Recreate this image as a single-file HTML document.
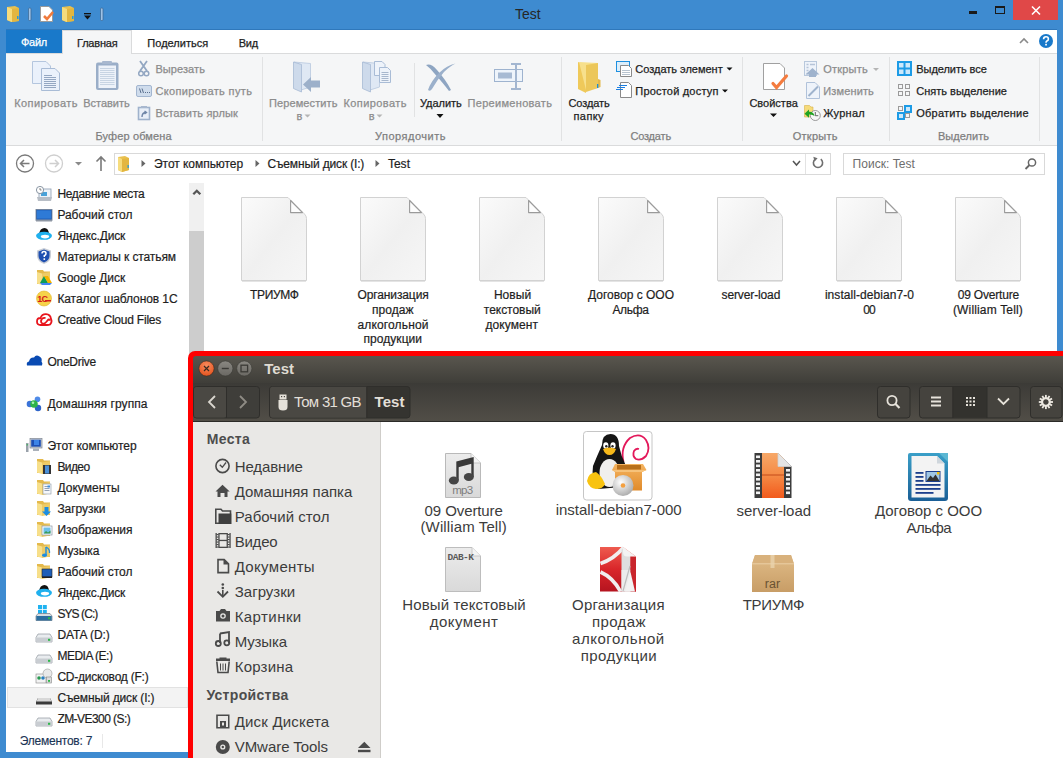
<!DOCTYPE html>
<html><head><meta charset="utf-8">
<style>
*{margin:0;padding:0;box-sizing:border-box}
html,body{width:1063px;height:758px;overflow:hidden;background:#3d88cc;font-family:"Liberation Sans",sans-serif;position:relative}
.a{position:absolute}
.t{position:absolute;white-space:nowrap;line-height:normal;font-family:"Liberation Sans",sans-serif}
svg{position:absolute;overflow:visible}
</style></head><body>
<div class="a" style="left:0;top:0;width:1063px;height:758px;background:#3e8bd0"></div>
<div class="a" style="left:6px;top:29px;width:1051px;height:1px;background:#2f78bb"></div>
<svg style="left:0;top:0" width="110" height="30">
<g transform="translate(7,6)"><path d="M0 1 L8 0 L12 2 L12 15 L4 16 L0 14 Z" fill="#e9c04e"/><path d="M0 1 L5 3 L5 16 L0 14Z" fill="#f6dc7d"/><path d="M5 3 L12 2 L12 15 L5 16Z" fill="#e3b640"/><rect x="10" y="10" width="1.5" height="3" fill="#2a9bd8"/></g>
<rect x="28.5" y="8" width="2.5" height="12.5" rx="1" fill="#9ec2e6" stroke="#3b668f" stroke-width="0.7"/>
<g transform="translate(40,6)"><path d="M0.5 0.5 H9 L12.5 4 V15.5 H0.5Z" fill="#fff" stroke="#9a9a9a"/><path d="M4 10 L7 13 L13 6" stroke="#f07a3c" stroke-width="2.6" fill="none"/></g>
<g transform="translate(62,6)"><path d="M0 1 L8 0 L12 2 L12 15 L4 16 L0 14 Z" fill="#e9c04e"/><path d="M0 1 L5 3 L5 16 L0 14Z" fill="#f6dc7d"/><path d="M5 3 L12 2 L12 15 L5 16Z" fill="#e3b640"/><rect x="10" y="10" width="1.5" height="3" fill="#2a9bd8"/></g>
<rect x="84" y="13" width="7" height="1.3" fill="#111"/><path d="M84 15.5 H91 L87.5 19.5Z" fill="#111"/>
<rect x="100.5" y="8" width="2.5" height="12.5" rx="1" fill="#9ec2e6" stroke="#3b668f" stroke-width="0.7"/>
</svg>
<div class="t" style="left:515.00px;top:5.60px;font-size:14px;color:#262626;letter-spacing:-0.047px;">Test</div>
<div class="a" style="left:969px;top:11px;width:8px;height:3px;background:#1a1a1a"></div>
<div class="a" style="left:995px;top:6px;width:10px;height:8px;border:1.5px solid #1a1a1a;border-top-width:2.5px"></div>
<div class="a" style="left:1013px;top:0;width:45px;height:20px;background:#e04848"></div>
<svg style="left:1031px;top:6px" width="10" height="9"><path d="M1 0.5 L9 8.5 M9 0.5 L1 8.5" stroke="#fff" stroke-width="1.6"/></svg>
<div class="a" style="left:6px;top:30px;width:1051px;height:23px;background:#fff"></div>
<div class="a" style="left:6px;top:30px;width:56px;height:23px;background:#1979ca"></div>
<div class="a" style="left:62px;top:30px;width:70px;height:24px;background:#f5f6f7;border:1px solid #dadbdc;border-bottom:none"></div>
<div class="t" style="left:21.00px;top:35.50px;font-size:11px;color:#fff;letter-spacing:-0.262px;-webkit-text-stroke:0.25px;">Файл</div>
<div class="t" style="left:77.00px;top:36.50px;font-size:11px;color:#1e1e1e;letter-spacing:-0.196px;-webkit-text-stroke:0.25px;">Главная</div>
<div class="t" style="left:147.30px;top:36.50px;font-size:11px;color:#1e1e1e;letter-spacing:0.025px;-webkit-text-stroke:0.25px;">Поделиться</div>
<div class="t" style="left:238.70px;top:36.50px;font-size:11px;color:#1e1e1e;letter-spacing:-0.202px;-webkit-text-stroke:0.25px;">Вид</div>
<svg style="left:1019px;top:37px" width="10" height="7"><path d="M1 6 L5 2 L9 6" stroke="#8a8a8a" stroke-width="1.6" fill="none"/></svg>
<svg style="left:1039px;top:34px" width="14" height="14"><circle cx="7" cy="7" r="7" fill="#1979ca"/><path d="M4.6 5.2 Q4.6 2.7 7 2.7 Q9.4 2.7 9.4 4.9 Q9.4 6.3 7.9 7 Q7 7.5 7 8.8" stroke="#fff" stroke-width="1.6" fill="none"/><rect x="6.2" y="9.8" width="1.7" height="1.7" fill="#fff"/></svg>
<div class="a" style="left:6px;top:53px;width:1051px;height:93px;background:#f5f6f7;border-top:1px solid #dadbdc;border-bottom:1px solid #dadbdc"></div>
<div class="a" style="left:63px;top:53px;width:68px;height:2px;background:#f5f6f7"></div>
<div class="a" style="left:262px;top:57px;width:1px;height:84px;background:#e1e2e3"></div>
<div class="a" style="left:561px;top:57px;width:1px;height:84px;background:#e1e2e3"></div>
<div class="a" style="left:742px;top:57px;width:1px;height:84px;background:#e1e2e3"></div>
<div class="a" style="left:889px;top:57px;width:1px;height:84px;background:#e1e2e3"></div>
<div class="a" style="left:1039px;top:57px;width:1px;height:84px;background:#e1e2e3"></div>
<div class="a" style="left:414px;top:63px;width:1px;height:54px;background:#e1e2e3"></div>
<svg style="left:0;top:0" width="1063" height="146">
<!-- copy -->
<path d="M32.5 61.5 H46 L50.5 66 V83.5 H32.5Z" fill="#eaf1fb" stroke="#b4c6de"/>
<path d="M41.5 68.5 H55 L59.5 73 V90.5 H41.5Z" fill="#eaf1fb" stroke="#a9bcd6"/>
<g stroke="#94a7c2" stroke-width="1"><path d="M44 75.5 H52 M44 77.5H56 M44 79.5H56 M44 81.5H56 M44 83.5H56 M44 85.5H56 M44 87.5H56"/></g>
<!-- paste -->
<rect x="96" y="62.5" width="22.5" height="27.5" rx="2" fill="#9aaec8"/>
<rect x="98.5" y="65.5" width="17.5" height="22.5" fill="#edf2f9"/>
<rect x="102" y="61" width="10" height="3" rx="1" fill="#a8b8cf"/>
<g stroke="#bccbdd" stroke-width="0.8"><path d="M100 68.5H114.5 M100 70.5H114.5 M100 72.5H114.5 M100 74.5H114.5 M100 76.5H114.5 M100 78.5H114.5 M100 80.5H114.5 M100 82.5H114.5 M100 84.5H114.5"/></g>
<!-- cut -->
<path d="M140 61 L147 71 M147 61 L140 71" stroke="#93a7c2" stroke-width="1.8"/>
<circle cx="141" cy="73.5" r="2.3" fill="none" stroke="#93a7c2" stroke-width="1.5"/>
<circle cx="146.5" cy="73.5" r="2.3" fill="none" stroke="#93a7c2" stroke-width="1.5"/>
<!-- copy path -->
<rect x="136.5" y="85.5" width="15" height="11" rx="1.5" fill="#cfdcec" stroke="#a3b6d0"/>
<path d="M139.5 88.5 L141 93 M142 88.5 L143.5 93" stroke="#5a6f8e" stroke-width="1"/>
<path d="M145 92.5h1 M147 92.5h1 M149 92.5h1" stroke="#5a6f8e"/>
<!-- paste shortcut -->
<rect x="138.5" y="107.5" width="11" height="12" fill="#e9eff8" stroke="#9fb2cc" stroke-width="1.6"/>
<rect x="141" y="106" width="6" height="2" fill="#a8b8cf"/>
<path d="M142 117 Q142 112.5 146 112.5 M144.5 111 L146.5 112.5 L144.5 114" stroke="#6f86a8" stroke-width="1.4" fill="none"/>
<!-- move to folder -->
<path d="M294 62 L310.5 63.5 V87 L301 90Z" fill="#dfe8f4" stroke="#b8c8de" stroke-width="0.8"/>
<path d="M293.5 62 L301.5 64.5 V92 L293.5 88.5Z" fill="#cddaeb" stroke="#a7bad4" stroke-width="0.8"/>
<path d="M303 84.5 L311 77 V80.5 H320 V87.5 H311 V92Z" fill="#9cb0ca"/>
<!-- copy to folder -->
<path d="M363 62 L379.5 63.5 V87 L370 90Z" fill="#dfe8f4" stroke="#b8c8de" stroke-width="0.8"/>
<path d="M362.5 62 L370.5 64.5 V92 L362.5 88.5Z" fill="#cddaeb" stroke="#a7bad4" stroke-width="0.8"/>
<path d="M374.5 61.5 H382 L385 64.5 V75.5 H374.5Z" fill="#eef3fa" stroke="#a9bcd6"/>
<path d="M379.5 67.5 H387.5 L390.5 70.5 V82.5 H379.5Z" fill="#eef3fa" stroke="#a9bcd6"/>
<path d="M381.5 72.5H388.5 M381.5 74.5H388.5 M381.5 76.5H388.5 M381.5 78.5H388.5 M381.5 80.5H388.5" stroke="#94a7c2" stroke-width="0.8"/>
<!-- delete X -->
<path d="M426 65 Q431 63 437 70 Q446 80 451 90 L449 91 Q443 83 434 73 Q430 68 426 65Z" fill="#8ea5c2"/>
<path d="M455.5 63.5 Q447 65 439 73 Q431 81 428 90 Q430 92 432 89 Q437 80 444 72 Q450 66 455.5 63.5Z" fill="#9bb0cb"/>
<!-- rename -->
<rect x="494.5" y="69.5" width="28" height="12" fill="#eef4fb" stroke="#9eb3cf"/>
<rect x="498" y="72.5" width="14" height="6" fill="#a7bad3"/>
<path d="M511 64 H521 M516 64 V89 M511 89 H521" stroke="#a3b6d0" stroke-width="2"/>
<!-- new folder (yellow) -->
<path d="M578 62 L586 65 L586 93 L578 89Z" fill="#efc95a"/>
<path d="M579 62 L598 63 L598 88 L586 90Z" fill="#f7e08c"/>
<path d="M586 65 L598 63 L598 88 L586 92Z" fill="#ecc75a"/>
<path d="M598 79 L600.5 80 V87 L598 88Z" fill="#e4b84a"/>
<rect x="597" y="84" width="1.3" height="4" fill="#1b8fd6"/>
<!-- new item -->
<rect x="616.5" y="61.5" width="13" height="10" fill="#ddeefa" stroke="#1e90e0"/>
<path d="M620.5 65.5 H628.5 L631.5 68.5 V76.5 H620.5Z" fill="#fff" stroke="#8a8a8a"/>
<path d="M622 70.5H630 M622 72.5H630 M622 74.5H630" stroke="#9ab" stroke-width="0.7"/>
<!-- easy access -->
<path d="M620.5 82.5 H628.5 L631.5 85.5 V97.5 H620.5Z" fill="#fff" stroke="#8a8a8a"/>
<path d="M619 85.5H627 M617 87.5H625 M616 89.5H623" stroke="#1e7fe0" stroke-width="1.2"/>
<!-- properties -->
<path d="M763.5 63.5 H780 L784.5 68 V89.5 H763.5Z" fill="#fff" stroke="#a0a0a0"/>
<path d="M773 83.5 L776.5 87.5 L786.5 76" stroke="#f47c3f" stroke-width="3.2" fill="none" stroke-linecap="round"/>
<!-- open -->
<rect x="804.5" y="61.5" width="12" height="14" fill="#eef3fa" stroke="#b8c8dc"/>
<path d="M806.5 64.5h2 M810 64.5h5 M806.5 67.5h2 M806.5 70.5h2 M806.5 73.5h2" stroke="#b6c4d8" stroke-width="1.5"/>
<path d="M812.5 68 L819.5 74.5 H816 V77 H809 V74.5 H805.5Z" fill="#9fb3cd"/>
<!-- edit -->
<path d="M806.5 82.5 H815 L819.5 87 V98.5 H806.5Z" fill="#eef3fa" stroke="#b0c2da"/>
<path d="M808.5 96 L818 86.5" stroke="#9fb3cd" stroke-width="2"/>
<!-- history -->
<path d="M804.5 105.5 H809.5 L811 107 H813 V117 H804.5Z" fill="#f6db7a" stroke="#d9b24a" stroke-width="0.6"/>
<circle cx="815.3" cy="115.5" r="5" fill="#f7f7f7" stroke="#8e8e8e" stroke-width="0.9"/>
<path d="M815.3 112 V115.7 H818.3" stroke="#555" stroke-width="0.9" fill="none"/>
<path d="M804.5 113.8 L809 109.5 V111.8 Q813.5 111.5 814.5 116 Q812 114 809 114.6 V117.8Z" fill="#21a321"/>
<!-- select all -->
<rect x="897" y="61" width="15" height="15" fill="#1c9be6"/>
<rect x="899" y="63" width="4.5" height="4.5" fill="#cbe8fb"/><rect x="905.5" y="63" width="4.5" height="4.5" fill="#cbe8fb"/>
<rect x="899" y="69.5" width="4.5" height="4.5" fill="#cbe8fb"/><rect x="905.5" y="69.5" width="4.5" height="4.5" fill="#cbe8fb"/>
<!-- select none -->
<g fill="none" stroke="#9a9a9a"><rect x="898.5" y="84.5" width="4" height="4"/><rect x="905.5" y="84.5" width="4" height="4"/><rect x="898.5" y="91.5" width="4" height="4"/><rect x="905.5" y="91.5" width="4" height="4"/></g>
<!-- invert -->
<g fill="none" stroke="#9a9a9a"><rect x="898.5" y="106.5" width="4" height="4"/><rect x="905.5" y="113.5" width="4" height="4"/></g>
<rect x="904" y="105" width="8" height="8" fill="#1c9be6"/><rect x="906" y="107" width="4" height="4" fill="#cbe8fb"/>
<rect x="897" y="112" width="8" height="8" fill="#1c9be6"/><rect x="899" y="114" width="4" height="4" fill="#cbe8fb"/>
</svg>
<div class="t" style="left:14.20px;top:97.00px;font-size:11px;color:#8c8c8c;letter-spacing:0.447px;-webkit-text-stroke:0.25px;">Копировать</div>
<div class="t" style="left:83.30px;top:97.00px;font-size:11px;color:#8c8c8c;letter-spacing:-0.030px;-webkit-text-stroke:0.25px;">Вставить</div>
<div class="t" style="left:155.40px;top:63.00px;font-size:11px;color:#8c8c8c;letter-spacing:0.083px;-webkit-text-stroke:0.25px;">Вырезать</div>
<div class="t" style="left:155.40px;top:85.00px;font-size:11px;color:#8c8c8c;letter-spacing:0.370px;-webkit-text-stroke:0.25px;">Скопировать путь</div>
<div class="t" style="left:155.40px;top:107.00px;font-size:11px;color:#8c8c8c;letter-spacing:0.148px;-webkit-text-stroke:0.25px;">Вставить ярлык</div>
<div class="t" style="left:95.50px;top:130.00px;font-size:11px;color:#7f7f7f;letter-spacing:0.121px;-webkit-text-stroke:0.25px;">Буфер обмена</div>
<div class="t" style="left:269.00px;top:97.00px;font-size:11px;color:#8c8c8c;letter-spacing:0.109px;-webkit-text-stroke:0.25px;">Переместить</div>
<div class="t" style="left:296.40px;top:109.50px;font-size:11px;color:#8c8c8c;-webkit-text-stroke:0.25px;">в</div>
<div class="t" style="left:343.40px;top:97.00px;font-size:11px;color:#8c8c8c;letter-spacing:0.437px;-webkit-text-stroke:0.25px;">Копировать</div>
<div class="t" style="left:368.70px;top:109.50px;font-size:11px;color:#8c8c8c;-webkit-text-stroke:0.25px;">в</div>
<svg style="left:0;top:0" width="1063" height="146"><path d="M304.5 114.5 H310.5 L307.5 117.5Z M376.5 114.5 H382.5 L379.5 117.5Z" fill="#b5b5b5"/><path d="M436.5 114 H443.5 L440 118Z M770 113.5 H777 L773.5 117Z" fill="#111"/><path d="M726.5 67.5 H732.5 L729.5 70.5Z M722 89.5 H728 L725 92.5Z" fill="#111"/><path d="M873 68 H879 L876 71Z" fill="#b5b5b5"/></svg>
<div class="t" style="left:420.00px;top:97.00px;font-size:11px;color:#1e1e1e;letter-spacing:-0.043px;-webkit-text-stroke:0.25px;">Удалить</div>
<div class="t" style="left:467.50px;top:97.00px;font-size:11px;color:#8c8c8c;letter-spacing:0.311px;-webkit-text-stroke:0.25px;">Переименовать</div>
<div class="t" style="left:375.00px;top:130.00px;font-size:11px;color:#7f7f7f;letter-spacing:0.494px;-webkit-text-stroke:0.25px;">Упорядочить</div>
<div class="t" style="left:568.40px;top:97.00px;font-size:11px;color:#1e1e1e;letter-spacing:-0.073px;-webkit-text-stroke:0.25px;">Создать</div>
<div class="t" style="left:573.50px;top:110.00px;font-size:11px;color:#1e1e1e;letter-spacing:0.406px;-webkit-text-stroke:0.25px;">папку</div>
<div class="t" style="left:635.30px;top:63.00px;font-size:11px;color:#1e1e1e;letter-spacing:-0.011px;-webkit-text-stroke:0.25px;">Создать элемент</div>
<div class="t" style="left:635.30px;top:85.00px;font-size:11px;color:#1e1e1e;letter-spacing:0.198px;-webkit-text-stroke:0.25px;">Простой доступ</div>
<div class="t" style="left:630.40px;top:130.00px;font-size:11px;color:#7f7f7f;letter-spacing:-0.173px;-webkit-text-stroke:0.25px;">Создать</div>
<div class="t" style="left:749.40px;top:97.00px;font-size:11px;color:#1e1e1e;letter-spacing:0.011px;-webkit-text-stroke:0.25px;">Свойства</div>
<div class="t" style="left:823.20px;top:63.00px;font-size:11px;color:#8c8c8c;letter-spacing:0.228px;-webkit-text-stroke:0.25px;">Открыть</div>
<div class="t" style="left:823.20px;top:85.00px;font-size:11px;color:#8c8c8c;letter-spacing:0.147px;-webkit-text-stroke:0.25px;">Изменить</div>
<div class="t" style="left:823.20px;top:107.00px;font-size:11px;color:#1e1e1e;letter-spacing:0.277px;-webkit-text-stroke:0.25px;">Журнал</div>
<div class="t" style="left:792.70px;top:130.00px;font-size:11px;color:#7f7f7f;letter-spacing:0.271px;-webkit-text-stroke:0.25px;">Открыть</div>
<div class="t" style="left:916.30px;top:63.00px;font-size:11px;color:#1e1e1e;letter-spacing:-0.053px;-webkit-text-stroke:0.25px;">Выделить все</div>
<div class="t" style="left:916.30px;top:85.00px;font-size:11px;color:#1e1e1e;-webkit-text-stroke:0.25px;">Снять выделение</div>
<div class="t" style="left:916.30px;top:107.00px;font-size:11px;color:#1e1e1e;letter-spacing:0.214px;-webkit-text-stroke:0.25px;">Обратить выделение</div>
<div class="t" style="left:938.00px;top:130.00px;font-size:11px;color:#7f7f7f;letter-spacing:0.031px;-webkit-text-stroke:0.25px;">Выделить</div>
<div class="a" style="left:6px;top:146px;width:1051px;height:606px;background:#fff"></div>
<svg style="left:0;top:146px" width="1063" height="37">
<circle cx="25" cy="17.5" r="8.5" fill="none" stroke="#7a7a7a" stroke-width="1.3"/>
<path d="M29.5 17.5 H20.5 M24 14 L20.5 17.5 L24 21" stroke="#7a7a7a" stroke-width="1.5" fill="none"/>
<circle cx="54" cy="17.5" r="8.5" fill="none" stroke="#cfcfcf" stroke-width="1.3"/>
<path d="M49.5 17.5 H58.5 M55 14 L58.5 17.5 L55 21" stroke="#cfcfcf" stroke-width="1.5" fill="none"/>
<path d="M75 16 H82 L78.5 19.5Z" fill="#8a8a8a"/>
<path d="M101 25 V11 M96.5 15.5 L101 11 L105.5 15.5" stroke="#7a7a7a" stroke-width="1.6" fill="none"/>
<rect x="114.5" y="7.5" width="716" height="21" fill="#fff" stroke="#d9d9d9"/>
<path d="M805.5 8 V28" stroke="#e3e3e3"/>
<path d="M793 15 L796.5 19 L800 15" stroke="#555" stroke-width="1.5" fill="none"/>
<path d="M820.8 13.2 A4.6 4.6 0 1 1 815.2 13.2" stroke="#6f6f6f" stroke-width="1.6" fill="none"/><path d="M813.3 10.8 L817.6 12.2 L814.6 15.4Z" fill="#6f6f6f"/>
<g transform="translate(118,10)"><path d="M0 1 L7 0 L11 2 L11 14 L4 16 L0 14 Z" fill="#e9c04e"/><path d="M0 1 L4 3 L4 16 L0 14Z" fill="#f6dc7d"/><path d="M4 3 L11 2 L11 14 L4 16Z" fill="#e3b640"/><rect x="9.5" y="9" width="1.3" height="3" fill="#2a9bd8"/></g>
<path d="M141.5 17.5 L145.5 21 L141.5 24.5Z M255.5 17.5 L259.5 21 L255.5 24.5Z M375.5 17.5 L379.5 21 L375.5 24.5Z" fill="#666" transform="translate(0,-3.5)"/>
<rect x="843.5" y="7.5" width="201" height="21" fill="#fff" stroke="#d9d9d9"/>
<circle cx="1032" cy="16.5" r="3.6" fill="none" stroke="#666" stroke-width="1.5"/><path d="M1029.5 19 L1025.5 23" stroke="#666" stroke-width="1.8"/>
</svg>
<div class="t" style="left:154.00px;top:157.00px;font-size:12px;color:#1e1e1e;letter-spacing:-0.045px;-webkit-text-stroke:0.2px;">Этот компьютер</div>
<div class="t" style="left:267.50px;top:157.00px;font-size:12px;color:#1e1e1e;letter-spacing:-0.155px;-webkit-text-stroke:0.2px;">Съемный диск (I:)</div>
<div class="t" style="left:387.90px;top:157.00px;font-size:12px;color:#1e1e1e;letter-spacing:0.021px;-webkit-text-stroke:0.2px;">Test</div>
<div class="t" style="left:852.60px;top:157.30px;font-size:12px;color:#6d6d6d;letter-spacing:0.024px;-webkit-text-stroke:0.2px;-webkit-text-stroke:0;">Поиск: Test</div>
<div class="a" style="left:189px;top:183px;width:15px;height:570px;background:#f0f0f0"></div>
<div class="a" style="left:189px;top:231px;width:15px;height:522px;background:#cdcdcd"></div>
<svg style="left:189px;top:186px" width="15" height="12"><path d="M4.3 8.3 L7.8 4.8 L11.3 8.3" stroke="#555" stroke-width="2.3" fill="none"/></svg>
<div class="a" style="left:7px;top:687px;width:181px;height:21px;background:#f3f3f3;border:1px solid #e2e2e2"></div>
<div class="t" style="left:57.40px;top:187.20px;font-size:12px;color:#1e1e1e;letter-spacing:-0.324px;-webkit-text-stroke:0.2px;">Недавние места</div>
<div class="t" style="left:57.40px;top:208.20px;font-size:12px;color:#1e1e1e;letter-spacing:-0.027px;-webkit-text-stroke:0.2px;">Рабочий стол</div>
<div class="t" style="left:57.40px;top:229.20px;font-size:12px;color:#1e1e1e;letter-spacing:-0.189px;-webkit-text-stroke:0.2px;">Яндекс.Диск</div>
<div class="t" style="left:57.40px;top:250.20px;font-size:12px;color:#1e1e1e;letter-spacing:-0.098px;-webkit-text-stroke:0.2px;">Материалы к статьям</div>
<div class="t" style="left:57.40px;top:271.20px;font-size:12px;color:#1e1e1e;letter-spacing:-0.037px;-webkit-text-stroke:0.2px;">Google Диск</div>
<div class="t" style="left:57.40px;top:292.20px;font-size:12px;color:#1e1e1e;letter-spacing:-0.088px;-webkit-text-stroke:0.2px;">Каталог шаблонов 1С</div>
<div class="t" style="left:57.40px;top:313.20px;font-size:12px;color:#1e1e1e;letter-spacing:-0.217px;-webkit-text-stroke:0.2px;">Creative Cloud Files</div>
<div class="t" style="left:47.50px;top:355.00px;font-size:12px;color:#1e1e1e;letter-spacing:-0.273px;-webkit-text-stroke:0.2px;">OneDrive</div>
<div class="t" style="left:47.50px;top:397.40px;font-size:12px;color:#1e1e1e;letter-spacing:0.065px;-webkit-text-stroke:0.2px;">Домашняя группа</div>
<div class="t" style="left:47.50px;top:439.20px;font-size:12px;color:#1e1e1e;letter-spacing:-0.045px;-webkit-text-stroke:0.2px;">Этот компьютер</div>
<div class="t" style="left:57.40px;top:460.20px;font-size:12px;color:#1e1e1e;letter-spacing:-0.592px;-webkit-text-stroke:0.2px;">Видео</div>
<div class="t" style="left:57.40px;top:481.20px;font-size:12px;color:#1e1e1e;letter-spacing:0.038px;-webkit-text-stroke:0.2px;">Документы</div>
<div class="t" style="left:57.40px;top:502.20px;font-size:12px;color:#1e1e1e;letter-spacing:-0.050px;-webkit-text-stroke:0.2px;">Загрузки</div>
<div class="t" style="left:57.40px;top:523.20px;font-size:12px;color:#1e1e1e;letter-spacing:-0.038px;-webkit-text-stroke:0.2px;">Изображения</div>
<div class="t" style="left:57.40px;top:544.20px;font-size:12px;color:#1e1e1e;letter-spacing:-0.076px;-webkit-text-stroke:0.2px;">Музыка</div>
<div class="t" style="left:57.40px;top:565.20px;font-size:12px;color:#1e1e1e;letter-spacing:-0.027px;-webkit-text-stroke:0.2px;">Рабочий стол</div>
<div class="t" style="left:57.40px;top:586.20px;font-size:12px;color:#1e1e1e;letter-spacing:-0.189px;-webkit-text-stroke:0.2px;">Яндекс.Диск</div>
<div class="t" style="left:57.40px;top:607.20px;font-size:12px;color:#1e1e1e;letter-spacing:-0.918px;-webkit-text-stroke:0.2px;">SYS (C:)</div>
<div class="t" style="left:57.40px;top:628.20px;font-size:12px;color:#1e1e1e;letter-spacing:-0.066px;-webkit-text-stroke:0.2px;">DATA (D:)</div>
<div class="t" style="left:57.40px;top:649.20px;font-size:12px;color:#1e1e1e;letter-spacing:-0.502px;-webkit-text-stroke:0.2px;">MEDIA (E:)</div>
<div class="t" style="left:57.40px;top:670.20px;font-size:12px;color:#1e1e1e;letter-spacing:-0.233px;-webkit-text-stroke:0.2px;">CD-дисковод (F:)</div>
<div class="t" style="left:57.40px;top:691.20px;font-size:12px;color:#1e1e1e;letter-spacing:-0.137px;-webkit-text-stroke:0.2px;">Съемный диск (I:)</div>
<div class="t" style="left:57.40px;top:712.20px;font-size:12px;color:#1e1e1e;letter-spacing:-0.555px;-webkit-text-stroke:0.2px;">ZM-VE300 (S:)</div>
<div class="t" style="left:19.80px;top:733.60px;font-size:12px;color:#1c3556;letter-spacing:-0.243px;-webkit-text-stroke:0.2px;-webkit-text-stroke:0.15px;">Элементов: 7</div>
<div class="a" style="left:102px;top:734px;width:1px;height:14px;background:#e8e8e8"></div>
<svg style="left:0;top:0" width="1063" height="360"><defs><linearGradient id="pg" x1="0" y1="0" x2="1" y2="1"><stop offset="0" stop-color="#fbfbfb"/><stop offset="0.5" stop-color="#f0f0f0"/><stop offset="1" stop-color="#f6f6f6"/></linearGradient></defs><path d="M241.5 197.5 H288 L304.5 214 Q306.5 216 306.5 218.5 V280.5 H241.5Z" fill="url(#pg)" stroke="#d2d2d2"/><path d="M290.6 200.5 V212.6 H302.5Z" fill="#fdfdfd" stroke="#9a9a9a" stroke-width="1.1" stroke-linejoin="round"/><path d="M242 281.5 H306" stroke="#e4e4e4"/><path d="M360.5 197.5 H407 L423.5 214 Q425.5 216 425.5 218.5 V280.5 H360.5Z" fill="url(#pg)" stroke="#d2d2d2"/><path d="M409.6 200.5 V212.6 H421.5Z" fill="#fdfdfd" stroke="#9a9a9a" stroke-width="1.1" stroke-linejoin="round"/><path d="M361 281.5 H425" stroke="#e4e4e4"/><path d="M479.5 197.5 H526 L542.5 214 Q544.5 216 544.5 218.5 V280.5 H479.5Z" fill="url(#pg)" stroke="#d2d2d2"/><path d="M528.6 200.5 V212.6 H540.5Z" fill="#fdfdfd" stroke="#9a9a9a" stroke-width="1.1" stroke-linejoin="round"/><path d="M480 281.5 H544" stroke="#e4e4e4"/><path d="M598.5 197.5 H645 L661.5 214 Q663.5 216 663.5 218.5 V280.5 H598.5Z" fill="url(#pg)" stroke="#d2d2d2"/><path d="M647.6 200.5 V212.6 H659.5Z" fill="#fdfdfd" stroke="#9a9a9a" stroke-width="1.1" stroke-linejoin="round"/><path d="M599 281.5 H663" stroke="#e4e4e4"/><path d="M717.5 197.5 H764 L780.5 214 Q782.5 216 782.5 218.5 V280.5 H717.5Z" fill="url(#pg)" stroke="#d2d2d2"/><path d="M766.6 200.5 V212.6 H778.5Z" fill="#fdfdfd" stroke="#9a9a9a" stroke-width="1.1" stroke-linejoin="round"/><path d="M718 281.5 H782" stroke="#e4e4e4"/><path d="M836.5 197.5 H883 L899.5 214 Q901.5 216 901.5 218.5 V280.5 H836.5Z" fill="url(#pg)" stroke="#d2d2d2"/><path d="M885.6 200.5 V212.6 H897.5Z" fill="#fdfdfd" stroke="#9a9a9a" stroke-width="1.1" stroke-linejoin="round"/><path d="M837 281.5 H901" stroke="#e4e4e4"/><path d="M955.5 197.5 H1002 L1018.5 214 Q1020.5 216 1020.5 218.5 V280.5 H955.5Z" fill="url(#pg)" stroke="#d2d2d2"/><path d="M1004.6 200.5 V212.6 H1016.5Z" fill="#fdfdfd" stroke="#9a9a9a" stroke-width="1.1" stroke-linejoin="round"/><path d="M956 281.5 H1020" stroke="#e4e4e4"/></svg>
<div class="t" style="left:250.00px;top:288.20px;font-size:12px;color:#1e1e1e;letter-spacing:-0.330px;-webkit-text-stroke:0.2px;">ТРИУМФ</div>
<div class="t" style="left:357.50px;top:288.20px;font-size:12px;color:#1e1e1e;letter-spacing:-0.116px;-webkit-text-stroke:0.2px;">Организация</div>
<div class="t" style="left:372.00px;top:302.90px;font-size:12px;color:#1e1e1e;letter-spacing:0.067px;-webkit-text-stroke:0.2px;">продаж</div>
<div class="t" style="left:357.50px;top:317.60px;font-size:12px;color:#1e1e1e;letter-spacing:0.144px;-webkit-text-stroke:0.2px;">алкогольной</div>
<div class="t" style="left:363.50px;top:332.30px;font-size:12px;color:#1e1e1e;letter-spacing:0.053px;-webkit-text-stroke:0.2px;">продукции</div>
<div class="t" style="left:493.90px;top:288.20px;font-size:12px;color:#1e1e1e;letter-spacing:0.051px;-webkit-text-stroke:0.2px;">Новый</div>
<div class="t" style="left:483.80px;top:302.90px;font-size:12px;color:#1e1e1e;letter-spacing:-0.030px;-webkit-text-stroke:0.2px;">текстовый</div>
<div class="t" style="left:485.50px;top:317.60px;font-size:12px;color:#1e1e1e;letter-spacing:0.064px;-webkit-text-stroke:0.2px;">документ</div>
<div class="t" style="left:588.00px;top:288.20px;font-size:12px;color:#1e1e1e;-webkit-text-stroke:0.2px;">Договор с ООО</div>
<div class="t" style="left:612.40px;top:302.90px;font-size:12px;color:#1e1e1e;letter-spacing:-0.302px;-webkit-text-stroke:0.2px;">Альфа</div>
<div class="t" style="left:721.60px;top:288.20px;font-size:12px;color:#1e1e1e;letter-spacing:-0.130px;-webkit-text-stroke:0.2px;">server-load</div>
<div class="t" style="left:824.90px;top:288.20px;font-size:12px;color:#1e1e1e;letter-spacing:0.061px;-webkit-text-stroke:0.2px;">install-debian7-0</div>
<div class="t" style="left:863.20px;top:302.90px;font-size:12px;color:#1e1e1e;letter-spacing:-0.780px;-webkit-text-stroke:0.2px;">00</div>
<div class="t" style="left:957.70px;top:288.20px;font-size:12px;color:#1e1e1e;letter-spacing:-0.189px;-webkit-text-stroke:0.2px;">09 Overture</div>
<div class="t" style="left:952.90px;top:302.90px;font-size:12px;color:#1e1e1e;letter-spacing:0.166px;-webkit-text-stroke:0.2px;">(William Tell)</div>
<svg style="left:0;top:0" width="200" height="758"><g transform="translate(36,186)"><rect x="3" y="3" width="12" height="9" fill="#eef3f8" stroke="#8a9bb0" stroke-width="0.8"/><rect x="5" y="6" width="6" height="4" fill="#4aa2d8"/><circle cx="4" cy="4" r="3.6" fill="#fff" stroke="#7d8a99" stroke-width="0.9"/><path d="M4 2 V4 H5.6" stroke="#555" stroke-width="0.7" fill="none"/><path d="M1 11 H16 L15 15 H2Z" fill="#b8bec6"/></g><g transform="translate(36,209)"><rect x="0" y="0.5" width="16" height="11" fill="#1f5fb8" stroke="#6b7b90" stroke-width="0.8"/><rect x="1" y="1.5" width="14" height="8" fill="#2e7ad6"/><rect x="0" y="10.5" width="16" height="2" fill="#8d96a3"/></g><g transform="translate(36,228)"><path d="M3 6 Q4 0 8.5 0 Q12.5 0 13 6Z" fill="#111"/><ellipse cx="8" cy="7.8" rx="8" ry="4" fill="#1fb0ee"/><ellipse cx="9" cy="8.6" rx="4.2" ry="1.8" fill="#fff"/></g><g transform="translate(36,585)"><path d="M3 6 Q4 0 8.5 0 Q12.5 0 13 6Z" fill="#111"/><ellipse cx="8" cy="7.8" rx="8" ry="4" fill="#1fb0ee"/><ellipse cx="9" cy="8.6" rx="4.2" ry="1.8" fill="#fff"/></g><g transform="translate(36,248)"><path d="M8 0 L15 2.5 V8 Q15 13 8 16 Q1 13 1 8 V2.5Z" fill="#c9ced6"/><path d="M8 1.5 L13.5 3.5 V8 Q13.5 12 8 14.5 Q2.5 12 2.5 8 V3.5Z" fill="#1f4fb0"/><path d="M6 5.5 Q6 3.5 8 3.5 Q10 3.5 10 5.5 Q10 7 8.3 7.6 V9" stroke="#fff" stroke-width="1.5" fill="none"/><rect x="7.5" y="10.3" width="1.6" height="1.6" fill="#fff"/></g><g transform="translate(36,269)"><path d="M1 1 H7 L8 2.5 H14 V15 H1Z" fill="#e4b94c"/><path d="M1 3 L6 4.5 V16 L1 14.5Z" fill="#f7df8a"/><path d="M6 4.5 L14 3 V14.5 L6 16Z" fill="#eecb66"/></g><g transform="translate(40,276)"><path d="M4 0 L8 7 H0Z" fill="#0f9d58"/><path d="M4 0 H8 L12 7 H8Z" fill="#f4b400"/><path d="M0 7 H12 L10 9 H2Z" fill="#4285f4"/></g><g transform="translate(36,291)"><circle cx="8" cy="7.5" r="7.5" fill="#f6d34a" stroke="#e0b52a" stroke-width="0.6"/><text x="1.2" y="11" font-family="Liberation Sans" font-weight="700" font-size="9" fill="#d4201a" letter-spacing="-0.6">1С</text><rect x="9" y="9" width="6" height="1.5" fill="#d4201a"/></g><g transform="translate(36,313)" fill="none" stroke="#e8151d" stroke-width="1.8"><path d="M4.5 12 Q1 12 1 8.5 Q1 5 4.5 5 Q6 1 10 1.2 Q14.5 1.5 15 6 Q16.5 9 14 11.5 Q13 12 11 12Z"/><path d="M9.5 5 Q5.5 4.5 5 8 Q5 11 8.5 10.5 Q10 9.5 11.5 7.5 Q13 5.5 14 7.5"/></g><g transform="translate(26,354)"><path d="M1 11.5 Q0 8 3 7.5 Q4 3 8 3.5 Q10 0 13.5 2.5 Q16.5 4 15.5 7.5 Q17 9 16 11.5Z" fill="#094ab2"/></g><g transform="translate(26,396)"><circle cx="4" cy="8" r="3.3" fill="#3a73d8"/><circle cx="11.5" cy="3.3" r="2.8" fill="#4f8be8"/><circle cx="12" cy="12" r="3.2" fill="#2e64c9"/><circle cx="8" cy="8" r="3.8" fill="#2fb34a"/><circle cx="7" cy="6.8" r="1.3" fill="#a9f0b5"/></g><g transform="translate(26,438)"><rect x="4" y="0.5" width="12" height="9.5" fill="#c7ccd3" stroke="#7f8893" stroke-width="0.7"/><rect x="5.2" y="1.7" width="9.6" height="7" fill="#1d4fb3"/><rect x="8" y="2" width="5" height="5" fill="#3d84e6"/><rect x="7" y="10.5" width="6" height="2.5" fill="#aab1ba"/><rect x="0" y="5" width="2.5" height="9" fill="#9aa2ab"/><rect x="0.7" y="6" width="1" height="1.5" fill="#2db84a"/></g><g transform="translate(36,458)"><path d="M1 1 H7 L8 2.5 H14 V15 H1Z" fill="#e4b94c"/><path d="M1 3 L6 4.5 V16 L1 14.5Z" fill="#f7df8a"/><path d="M6 4.5 L14 3 V14.5 L6 16Z" fill="#eecb66"/></g><g transform="translate(36,479)"><path d="M1 1 H7 L8 2.5 H14 V15 H1Z" fill="#e4b94c"/><path d="M1 3 L6 4.5 V16 L1 14.5Z" fill="#f7df8a"/><path d="M6 4.5 L14 3 V14.5 L6 16Z" fill="#eecb66"/></g><g transform="translate(36,500)"><path d="M1 1 H7 L8 2.5 H14 V15 H1Z" fill="#e4b94c"/><path d="M1 3 L6 4.5 V16 L1 14.5Z" fill="#f7df8a"/><path d="M6 4.5 L14 3 V14.5 L6 16Z" fill="#eecb66"/></g><g transform="translate(36,521)"><path d="M1 1 H7 L8 2.5 H14 V15 H1Z" fill="#e4b94c"/><path d="M1 3 L6 4.5 V16 L1 14.5Z" fill="#f7df8a"/><path d="M6 4.5 L14 3 V14.5 L6 16Z" fill="#eecb66"/></g><g transform="translate(36,542)"><path d="M1 1 H7 L8 2.5 H14 V15 H1Z" fill="#e4b94c"/><path d="M1 3 L6 4.5 V16 L1 14.5Z" fill="#f7df8a"/><path d="M6 4.5 L14 3 V14.5 L6 16Z" fill="#eecb66"/></g><g transform="translate(36,563)"><path d="M1 1 H7 L8 2.5 H14 V15 H1Z" fill="#e4b94c"/><path d="M1 3 L6 4.5 V16 L1 14.5Z" fill="#f7df8a"/><path d="M6 4.5 L14 3 V14.5 L6 16Z" fill="#eecb66"/></g><g transform="translate(43,465)"><rect x="0" y="0" width="8" height="9" fill="#333"/><rect x="2" y="0.5" width="4" height="8" fill="#4a90d9"/></g><g transform="translate(43,484)"><rect x="0" y="0" width="8" height="10" fill="#f6f8fb" stroke="#8b96a5" stroke-width="0.6"/><path d="M1.5 2.5H6.5 M1.5 4.5H6.5 M1.5 6.5H6.5" stroke="#6a7d9a" stroke-width="0.7"/><rect x="4.5" y="1.5" width="2.5" height="2" fill="#3d8ee0"/></g><g transform="translate(42,507)"><path d="M2.5 0 H6.5 V4.5 H9 L4.5 9 L0 4.5 H2.5Z" fill="#1c8de0"/></g><g transform="translate(42,526)"><rect x="0" y="0" width="10" height="9" fill="#fff" stroke="#8b96a5" stroke-width="0.7"/><rect x="1.5" y="1.5" width="7" height="6" fill="#6cc0ea"/><path d="M1.5 7.5 L4 5 L6 6.5 L8.5 4.5 V7.5Z" fill="#3a9a58"/></g><g transform="translate(42,547)"><path d="M4 0 V8" stroke="#1c8de0" stroke-width="1.4"/><ellipse cx="2.5" cy="8.3" rx="2.5" ry="1.8" fill="#1c8de0"/><path d="M4 0 Q8 2 7.5 6" stroke="#1c8de0" stroke-width="1.3" fill="none"/></g><g transform="translate(42,569)"><rect x="0" y="0" width="10" height="8" fill="#1f5fb8" stroke="#222" stroke-width="0.6"/><rect x="0" y="7.5" width="10" height="1.5" fill="#222"/></g><g transform="translate(38,605)"><rect x="0" y="0" width="4" height="4" fill="#1fb2f0"/><rect x="4.8" y="0" width="4" height="4" fill="#1fb2f0"/><rect x="0" y="4.8" width="4" height="4" fill="#1fb2f0"/><rect x="4.8" y="4.8" width="4" height="4" fill="#1fb2f0"/></g><g transform="translate(36,613)"><path d="M2 0.5 H14 L16 3 V7.5 H0 V3Z" fill="#d6dce2" stroke="#6f7a85" stroke-width="0.7"/><rect x="0.3" y="3" width="15.4" height="4.5" fill="#2d6e9e"/><rect x="12" y="4.2" width="2.2" height="2" fill="#2fb84a"/></g><g transform="translate(36,633.5)"><path d="M2 0.5 H14 L16 4 V8.5 H0 V4Z" fill="#e9ecef" stroke="#8f969e" stroke-width="0.7"/><rect x="0.3" y="4" width="15.4" height="4.5" fill="#c9cdd2"/><rect x="12" y="5.3" width="2.2" height="2" fill="#2fb84a"/></g><g transform="translate(36,654.5)"><path d="M2 0.5 H14 L16 4 V8.5 H0 V4Z" fill="#e9ecef" stroke="#8f969e" stroke-width="0.7"/><rect x="0.3" y="4" width="15.4" height="4.5" fill="#c9cdd2"/><rect x="12" y="5.3" width="2.2" height="2" fill="#2fb84a"/></g><g transform="translate(36,668)"><rect x="0" y="6" width="10" height="9" fill="#f3f3f3" stroke="#888" stroke-width="0.6"/><circle cx="3" cy="10" r="1.8" fill="#2a9a52"/><circle cx="7" cy="10" r="1.8" fill="#2a7fc0"/><circle cx="11.5" cy="5.5" r="4.5" fill="#e9e9e9" stroke="#999" stroke-width="0.6"/><rect x="10.5" y="9" width="5" height="6" fill="#ddd" stroke="#888" stroke-width="0.6"/><rect x="12" y="12" width="2" height="1.8" fill="#2fb84a"/></g><g transform="translate(36,697)"><path d="M2 1 H14 L16 5 V7.5 H0 V5Z" fill="#3a3a3a"/><path d="M2 1 H14 L15.5 4.5 H0.5Z" fill="#d8d8d8"/></g><g transform="translate(36,717.5)"><path d="M2 0.5 H14 L16 4 V8.5 H0 V4Z" fill="#e9ecef" stroke="#8f969e" stroke-width="0.7"/><rect x="0.3" y="4" width="15.4" height="4.5" fill="#c9cdd2"/><rect x="12" y="5.3" width="2.2" height="2" fill="#2fb84a"/></g></svg>
<div class="a" style="left:188px;top:351px;width:880px;height:420px;background:#ff0000;border-radius:7px 0 0 0"></div>
<div class="a" style="left:193px;top:356px;width:870px;height:27px;background:linear-gradient(#59564e,#3f3e39);border-radius:3px 0 0 0"></div>
<div class="a" style="left:193px;top:383px;width:870px;height:38px;background:linear-gradient(#3c3b37,#514e47)"></div>
<div class="a" style="left:193px;top:421px;width:870px;height:1px;background:#2b2a27"></div>
<div class="a" style="left:193px;top:422px;width:187px;height:336px;background:#e9e8e6"></div>
<div class="a" style="left:380px;top:422px;width:1px;height:336px;background:#cfcdc9"></div>
<div class="a" style="left:381px;top:422px;width:682px;height:336px;background:#fff"></div>
<svg style="left:0;top:0" width="1063" height="430">
<defs>
<radialGradient id="cl" cx="0.5" cy="0.3" r="0.7"><stop offset="0" stop-color="#f88b5d"/><stop offset="1" stop-color="#e4541f"/></radialGradient>
<linearGradient id="gb" x1="0" y1="0" x2="0" y2="1"><stop offset="0" stop-color="#8a8882"/><stop offset="1" stop-color="#6a6863"/></linearGradient>
<linearGradient id="btn" x1="0" y1="0" x2="0" y2="1"><stop offset="0" stop-color="#4d4b45"/><stop offset="1" stop-color="#45433e"/></linearGradient>
</defs>
<circle cx="206.5" cy="368.5" r="7.6" fill="url(#cl)" stroke="#3a2a20" stroke-width="0.6"/>
<path d="M204 366 L209 371 M209 366 L204 371" stroke="#3a2a20" stroke-width="1.2"/>
<circle cx="225.3" cy="368.5" r="7.6" fill="url(#gb)" stroke="#3b3a36" stroke-width="0.6"/>
<path d="M221.8 368.5 H228.8" stroke="#3b3a36" stroke-width="1.4"/>
<circle cx="244.3" cy="368.5" r="7.6" fill="url(#gb)" stroke="#3b3a36" stroke-width="0.6"/>
<rect x="241" y="365.2" width="6.6" height="6.6" fill="none" stroke="#3b3a36" stroke-width="1.3"/>
<!-- nav buttons -->
<rect x="193.5" y="386.5" width="66" height="31.5" rx="3" fill="#3f3e3a" stroke="#2f2e2b"/>
<rect x="194" y="387" width="32.3" height="30.5" rx="2.5" fill="#4a4843"/>
<path d="M226.5 387 V418" stroke="#2f2e2b"/>
<path d="M215 396 L209 402 L215 408" stroke="#dad6cf" stroke-width="1.8" fill="none"/>
<path d="M240 396 L246 402 L240 408" stroke="#8f8c85" stroke-width="1.8" fill="none"/>
<!-- path bar -->
<rect x="269.5" y="386.5" width="140.5" height="31.5" rx="3" fill="#353430" stroke="#2f2e2b"/>
<path d="M272.5 386.8 H366.5 V417.7 H272.5 Q270 417.7 270 415 V389.5 Q270 386.8 272.5 386.8Z" fill="#4a4843"/>
<path d="M366.8 387 V418" stroke="#2f2e2b"/>
<rect x="279.5" y="394.5" width="7" height="5" fill="#e6e2da"/>
<rect x="281" y="396" width="1.2" height="1.2" fill="#4a4843"/><rect x="283.8" y="396" width="1.2" height="1.2" fill="#4a4843"/>
<path d="M278.5 400 H287.5 V407 Q287.5 410.5 283 410.5 Q278.5 410.5 278.5 407Z" fill="#e6e2da"/>
<!-- search -->
<rect x="877.5" y="386.5" width="32.5" height="31.5" rx="3" fill="#45433e" stroke="#2f2e2b"/>
<circle cx="892" cy="400.5" r="4.6" fill="none" stroke="#e6e2da" stroke-width="1.8"/>
<path d="M895.3 403.8 L899.5 408" stroke="#e6e2da" stroke-width="2.2"/>
<!-- view group -->
<rect x="919.5" y="386.5" width="100.5" height="31.5" rx="3" fill="#45433e" stroke="#2f2e2b"/>
<rect x="952.8" y="386.8" width="34.2" height="31" fill="#33322e"/>
<path d="M952.8 387 V418 M987 387 V418" stroke="#2f2e2b"/>
<path d="M931 397.5 H941 M931 401.5 H941 M931 405.5 H941" stroke="#e6e2da" stroke-width="2"/>
<g fill="#e6e2da"><rect x="966" y="397" width="2" height="2"/><rect x="969.5" y="397" width="2" height="2"/><rect x="973" y="397" width="2" height="2"/><rect x="966" y="400.5" width="2" height="2"/><rect x="969.5" y="400.5" width="2" height="2"/><rect x="973" y="400.5" width="2" height="2"/><rect x="966" y="404" width="2" height="2"/><rect x="969.5" y="404" width="2" height="2"/><rect x="973" y="404" width="2" height="2"/></g>
<path d="M998 398.5 L1003.5 404 L1009 398.5" stroke="#e6e2da" stroke-width="1.8" fill="none"/>
<!-- gear -->
<rect x="1030.5" y="386.5" width="31.5" height="31.5" rx="3" fill="#45433e" stroke="#2f2e2b"/>
<g transform="translate(1045.9,402)" fill="#ece8e0"><circle r="3.8" fill="none" stroke="#ece8e0" stroke-width="2.1"/><rect x="-0.9" y="-7.1" width="1.8" height="3.4" transform="rotate(0)"/><rect x="-0.9" y="-7.1" width="1.8" height="3.4" transform="rotate(30)"/><rect x="-0.9" y="-7.1" width="1.8" height="3.4" transform="rotate(60)"/><rect x="-0.9" y="-7.1" width="1.8" height="3.4" transform="rotate(90)"/><rect x="-0.9" y="-7.1" width="1.8" height="3.4" transform="rotate(120)"/><rect x="-0.9" y="-7.1" width="1.8" height="3.4" transform="rotate(150)"/><rect x="-0.9" y="-7.1" width="1.8" height="3.4" transform="rotate(180)"/><rect x="-0.9" y="-7.1" width="1.8" height="3.4" transform="rotate(210)"/><rect x="-0.9" y="-7.1" width="1.8" height="3.4" transform="rotate(240)"/><rect x="-0.9" y="-7.1" width="1.8" height="3.4" transform="rotate(270)"/><rect x="-0.9" y="-7.1" width="1.8" height="3.4" transform="rotate(300)"/><rect x="-0.9" y="-7.1" width="1.8" height="3.4" transform="rotate(330)"/></g>
</svg>
<div class="t" style="left:264.30px;top:359.80px;font-size:15px;color:#dfdbd2;font-weight:700;">Test</div>
<div class="t" style="left:293.90px;top:393.10px;font-size:15px;color:#e3dfd7;letter-spacing:-0.705px;">Том 31 GB</div>
<div class="t" style="left:374.50px;top:393.10px;font-size:15px;color:#e3dfd7;font-weight:700;letter-spacing:0.091px;">Test</div>
<div class="t" style="left:206.80px;top:430.50px;font-size:14px;color:#4d4d4d;font-weight:700;letter-spacing:0.299px;">Места</div>
<div class="t" style="left:234.70px;top:457.70px;font-size:15px;color:#3c3c3c;letter-spacing:-0.103px;">Недавние</div>
<div class="t" style="left:234.70px;top:482.70px;font-size:15px;color:#3c3c3c;letter-spacing:-0.021px;">Домашняя папка</div>
<div class="t" style="left:234.70px;top:507.70px;font-size:15px;color:#3c3c3c;letter-spacing:0.052px;">Рабочий стол</div>
<div class="t" style="left:234.70px;top:532.70px;font-size:15px;color:#3c3c3c;letter-spacing:-0.226px;">Видео</div>
<div class="t" style="left:234.70px;top:557.70px;font-size:15px;color:#3c3c3c;letter-spacing:0.330px;">Документы</div>
<div class="t" style="left:234.70px;top:582.70px;font-size:15px;color:#3c3c3c;letter-spacing:0.028px;">Загрузки</div>
<div class="t" style="left:234.70px;top:607.70px;font-size:15px;color:#3c3c3c;letter-spacing:0.428px;">Картинки</div>
<div class="t" style="left:234.70px;top:632.70px;font-size:15px;color:#3c3c3c;letter-spacing:-0.127px;">Музыка</div>
<div class="t" style="left:234.70px;top:657.70px;font-size:15px;color:#3c3c3c;letter-spacing:0.208px;">Корзина</div>
<div class="t" style="left:206.40px;top:686.70px;font-size:14px;color:#4d4d4d;font-weight:700;letter-spacing:0.307px;">Устройства</div>
<div class="t" style="left:234.70px;top:713.20px;font-size:15px;color:#3c3c3c;letter-spacing:0.189px;">Диск Дискета</div>
<div class="t" style="left:234.70px;top:738.20px;font-size:15px;color:#3c3c3c;letter-spacing:-0.045px;">VMware Tools</div>
<svg style="left:0;top:0" width="1063" height="758">
<g fill="#4a4a4a" stroke="none">
<circle cx="222.5" cy="466" r="6.6" fill="none" stroke="#4a4a4a" stroke-width="1.6"/>
<path d="M219.8 464.8 L222.3 467.3 L226 462.5" fill="none" stroke="#4a4a4a" stroke-width="1.3"/>
<path d="M215.5 491.5 L222.5 484.8 L229.7 491.5 H227.5 V497 H224.5 V493 H220.5 V497 H217.5 V491.5Z"/>
<path d="M215.8 509.3 H221 L222.5 511 H230.5 V523.3 H215.8Z" fill="none" stroke="#4a4a4a" stroke-width="1.6"/>
<path d="M218.5 513.5 H231.3 V524 H218.5Z" fill="#3f3f3f"/>
<g fill="#4a4a4a"><rect x="215.5" y="533" width="1.3" height="15"/><rect x="218.3" y="533" width="1.3" height="15"/><rect x="226.6" y="533" width="1.3" height="15"/><rect x="229.4" y="533" width="1.3" height="15"/><rect x="216.5" y="534" width="2" height="1.1"/><rect x="227.6" y="534" width="2" height="1.1"/><rect x="216.5" y="536.5" width="2" height="1.1"/><rect x="227.6" y="536.5" width="2" height="1.1"/><rect x="216.5" y="539" width="2" height="1.1"/><rect x="227.6" y="539" width="2" height="1.1"/><rect x="216.5" y="541.5" width="2" height="1.1"/><rect x="227.6" y="541.5" width="2" height="1.1"/><rect x="216.5" y="544" width="2" height="1.1"/><rect x="227.6" y="544" width="2" height="1.1"/><rect x="216.5" y="546.5" width="2" height="1.1"/><rect x="227.6" y="546.5" width="2" height="1.1"/><rect x="219" y="533" width="8" height="1.3"/><rect x="219" y="539.8" width="8" height="1.3"/><rect x="219" y="546.7" width="8" height="1.3"/></g>
<path d="M217.2 558.8 H224.5 L229.3 563.6 V573.4 H217.2Z M218.8 560.4 V571.8 H227.7 V564.6 H223.5 V560.4Z" fill-rule="evenodd"/>
<circle cx="222.8" cy="584.5" r="1.3"/><circle cx="222.8" cy="588" r="1.3"/>
<path d="M222.8 590 V596" stroke="#4a4a4a" stroke-width="1.6"/><path d="M217.5 591.5 L222.8 596.8 L228 591.5" fill="none" stroke="#4a4a4a" stroke-width="1.8"/>
<path d="M216 611 H219.5 L221 609 H225 L226.5 611 H230 V621.5 H216Z"/><circle cx="223" cy="616" r="2.8" fill="#e9e8e6"/><circle cx="223" cy="616" r="1.5"/>
<path d="M220 633.5 L229 632 V643" fill="none" stroke="#4a4a4a" stroke-width="1.8"/><circle cx="218.3" cy="643.5" r="2.5" fill="none" stroke="#4a4a4a" stroke-width="1.8"/><circle cx="226.8" cy="642.8" r="2.5" fill="none" stroke="#4a4a4a" stroke-width="1.8"/><path d="M220 633.5 V643" stroke="#4a4a4a" stroke-width="1.8"/>
<path d="M216 658.5 H230 V661 H216Z M219.5 657.5 H226.5 V659 H219.5Z"/><path d="M216.8 661.5 L218 672.5 H228 L229.2 661.5" fill="none" stroke="#4a4a4a" stroke-width="1.6"/><path d="M220.5 663.5 V670.5 M223 663.5 V670.5 M225.5 663.5 V670.5" stroke="#4a4a4a" stroke-width="1"/>
<path d="M216.2 714.5 H229.5 V728.5 H216.2Z M217.8 716 V727 H228 V716Z" fill-rule="evenodd"/><rect x="220" y="721" width="6" height="6"/><rect x="222" y="722.5" width="2" height="3" fill="#e9e8e6"/>
<circle cx="222.8" cy="747" r="7"/><circle cx="222.8" cy="747" r="2.6" fill="#e9e8e6"/><circle cx="222.8" cy="747" r="1.2"/>
<path d="M358 748 L364.3 741.8 L370.5 748Z"/><rect x="358" y="749.8" width="12.5" height="2.4"/>
</g>
</svg>
<div class="t" style="left:424.60px;top:501.50px;font-size:15px;color:#3c3c3c;letter-spacing:-0.093px;">09 Overture</div>
<div class="t" style="left:420.50px;top:518.00px;font-size:15px;color:#3c3c3c;letter-spacing:0.119px;">(William Tell)</div>
<div class="t" style="left:555.80px;top:501.30px;font-size:15px;color:#3c3c3c;letter-spacing:-0.056px;">install-debian7-000</div>
<div class="t" style="left:736.50px;top:501.90px;font-size:15px;color:#3c3c3c;letter-spacing:-0.048px;">server-load</div>
<div class="t" style="left:874.90px;top:501.90px;font-size:15px;color:#3c3c3c;letter-spacing:-0.022px;">Договор с ООО</div>
<div class="t" style="left:906.60px;top:518.50px;font-size:15px;color:#3c3c3c;letter-spacing:-0.573px;">Альфа</div>
<div class="t" style="left:402.30px;top:596.40px;font-size:15px;color:#3c3c3c;letter-spacing:0.105px;">Новый текстовый</div>
<div class="t" style="left:429.70px;top:613.00px;font-size:15px;color:#3c3c3c;letter-spacing:0.466px;">документ</div>
<div class="t" style="left:572.10px;top:596.40px;font-size:15px;color:#3c3c3c;letter-spacing:0.194px;">Организация</div>
<div class="t" style="left:592.00px;top:613.40px;font-size:15px;color:#3c3c3c;letter-spacing:0.382px;">продаж</div>
<div class="t" style="left:572.10px;top:630.40px;font-size:15px;color:#3c3c3c;letter-spacing:0.518px;">алкогольной</div>
<div class="t" style="left:580.70px;top:647.40px;font-size:15px;color:#3c3c3c;letter-spacing:0.427px;">продукции</div>
<div class="t" style="left:742.70px;top:596.40px;font-size:15px;color:#3c3c3c;letter-spacing:-0.286px;">ТРИУМФ</div>
<svg style="left:0;top:0" width="1063" height="758">
<defs>
<linearGradient id="mpg" x1="0" y1="0" x2="0" y2="1"><stop offset="0" stop-color="#ececec"/><stop offset="1" stop-color="#d9d9d9"/></linearGradient>
<linearGradient id="flm" x1="0" y1="0" x2="0" y2="1"><stop offset="0" stop-color="#f7a868"/><stop offset="0.5" stop-color="#f58a45"/><stop offset="1" stop-color="#f25a1c"/></linearGradient>
<linearGradient id="wrb" x1="0" y1="0" x2="0" y2="1"><stop offset="0" stop-color="#3a9fc8"/><stop offset="1" stop-color="#1a5f96"/></linearGradient>
<linearGradient id="pdf" x1="0" y1="0" x2="0" y2="1"><stop offset="0" stop-color="#ee5b4f"/><stop offset="0.5" stop-color="#d9262a"/><stop offset="1" stop-color="#b5141f"/></linearGradient>
<linearGradient id="box" x1="0" y1="0" x2="0" y2="1"><stop offset="0" stop-color="#e0bc88"/><stop offset="1" stop-color="#c89d66"/></linearGradient>
<radialGradient id="cd" cx="0.4" cy="0.35" r="0.7"><stop offset="0" stop-color="#ffffff"/><stop offset="1" stop-color="#a9a9a9"/></radialGradient>
<linearGradient id="crt" x1="0" y1="0" x2="0" y2="1"><stop offset="0" stop-color="#f5b460"/><stop offset="1" stop-color="#e08a2a"/></linearGradient>
</defs>
<!-- mp3 -->
<path d="M445.5 453.5 H471 L480.5 463 V497.5 H445.5Z" fill="url(#mpg)" stroke="#b9b9b9"/>
<path d="M471 453.5 V463 H480.5" fill="#f4f4f4" stroke="#c4c4c4"/>
<path d="M457.5 480 V462.5 L472.5 458.5 V477" stroke="#3a3a3a" stroke-width="2.4" fill="none"/>
<path d="M457.5 462.5 L472.5 458.5 V463.5 L457.5 467.5Z" fill="#3a3a3a"/>
<ellipse cx="453.8" cy="480.5" rx="5" ry="4" fill="#454545"/>
<ellipse cx="468.8" cy="477" rx="5" ry="4" fill="#454545"/>
<text x="462.7" y="493.5" font-family="Liberation Sans" font-size="11.5" fill="#7d7d7d" text-anchor="middle" textLength="21">mp3</text>
<!-- debian thumbnail -->
<rect x="583.5" y="431.5" width="68.5" height="68.5" rx="3" fill="#fff" stroke="#c6c6c6"/>
<path d="M623.5 462 Q620 447 630 438 Q640 432 646 440 Q651 448 646 456 Q641 461 636 459 Q632 456 634 451 Q636 448 639 449" fill="none" stroke="#e3185a" stroke-width="1.8"/>
<path d="M602 445 Q602 434 610.5 434 Q619 434 619 446 Q621 456 626 466 Q629 478 622 487 L598 489 Q591 478 593 466 Q597 456 602 445Z" fill="#151515"/>
<ellipse cx="609.5" cy="473" rx="10" ry="14" fill="#f0efed"/>
<ellipse cx="605.8" cy="445.5" rx="2.6" ry="3.2" fill="#fff"/><ellipse cx="613" cy="445.5" rx="2.6" ry="3.2" fill="#fff"/>
<circle cx="606.3" cy="446.3" r="1.2" fill="#222"/><circle cx="612.5" cy="446.3" r="1.2" fill="#222"/>
<path d="M603 449 Q609 446 616 449 Q614 455 609.5 455 Q605 455 603 449Z" fill="#f6b81a"/>
<path d="M587 481 Q588 473 596 472 Q601 475 605 484 Q603 489 596 489 Q589 488 587 481Z" fill="#f8c310"/>
<path d="M612 470 L615 464 L643 464 L646.5 470 L642 472 V490.5 H615 V472Z" fill="url(#crt)"/>
<rect x="617" y="465" width="24" height="4.5" fill="#b8701c"/>
<path d="M612 470 L616 472 H642 L646.5 470" fill="#f6c27a"/>
<circle cx="623" cy="485.5" r="10.5" fill="url(#cd)"/>
<circle cx="623" cy="485.5" r="2.3" fill="#f4a040"/>
<!-- film -->
<path d="M754.5 453 H778 L791.5 466.5 V498 H754.5Z" fill="#3c3c3c"/>
<path d="M762 453 H778 L784 459 V498 H762Z" fill="url(#flm)"/>
<path d="M778 453 L791.5 466.5 H778Z" fill="#e4e4e4"/><path d="M778 453 V466.5 H791.5" fill="none" stroke="#cfcfcf" stroke-width="0.8"/>
<path d="M762 475 H784" stroke="#c44a1a" stroke-width="1"/>
<g fill="#f2f2f2">
<rect x="756" y="455.5" width="4" height="2.6"/><rect x="756" y="460" width="4" height="2.6"/><rect x="756" y="464.5" width="4" height="2.6"/><rect x="756" y="469" width="4" height="2.6"/><rect x="756" y="473.5" width="4" height="2.6"/><rect x="756" y="478" width="4" height="2.6"/><rect x="756" y="482.5" width="4" height="2.6"/><rect x="756" y="487" width="4" height="2.6"/><rect x="756" y="491.5" width="4" height="2.6"/>
<rect x="786" y="469" width="4" height="2.6"/><rect x="786" y="473.5" width="4" height="2.6"/><rect x="786" y="478" width="4" height="2.6"/><rect x="786" y="482.5" width="4" height="2.6"/><rect x="786" y="487" width="4" height="2.6"/><rect x="786" y="491.5" width="4" height="2.6"/>
</g>
<!-- writer -->
<path d="M910 453 H940 L948 461 V498 Q948 501 945 501 H911 Q908 501 908 498 V455 Q908 453 910 453Z" fill="url(#wrb)"/>
<path d="M911.5 456 H937 L944.5 463.5 V497.5 H911.5Z" fill="#f3f3f3"/>
<path d="M939 453 H948 V462Z" fill="#5bb7d3"/>
<path d="M937 456 L944.5 463.5 H937Z" fill="#cfd6dc"/>
<g fill="#1c3f8c">
<rect x="915.5" y="472" width="8" height="1.8"/><rect x="915.5" y="476" width="8" height="1.8"/><rect x="915.5" y="480" width="8" height="1.8"/>
<rect x="915.5" y="484" width="25" height="1.8"/><rect x="915.5" y="488" width="25" height="1.8"/><rect x="915.5" y="492" width="18" height="1.8"/>
</g>
<rect x="925.5" y="471" width="15" height="11" fill="#1c3f8c"/><rect x="926.5" y="472" width="13" height="9" fill="#9fc6e4"/>
<path d="M926.5 481 L930.5 475.5 L933 478 L935.5 474.5 L939.5 481Z" fill="#333"/>
<rect x="937" y="472" width="2.5" height="2.5" fill="#f4c20d"/>
<!-- text doc -->
<path d="M445.5 547.5 H472 L480.5 556 V591.5 H445.5Z" fill="url(#mpg)" stroke="#bdbdbd"/>
<path d="M472 547.5 V556 H480.5" fill="#f4f4f4" stroke="#c8c8c8"/>
<text x="447.5" y="559.5" font-family="Liberation Mono" font-weight="700" font-size="9.5" fill="#5a5a5a" letter-spacing="-0.5">DAB-K</text>
<!-- pdf -->
<path d="M600 547 H623 L636 556.5 V591.5 H600Z" fill="url(#pdf)"/>
<path d="M600.5 563.5 Q614 559 623.5 547.5" stroke="#f1eeee" stroke-width="3.6" fill="none"/>
<path d="M600.5 572 Q613 577.5 620.5 591.5" stroke="#f1eeee" stroke-width="3.6" fill="none"/>
<path d="M621.5 550 L623.5 548 L630.5 555.5 V591.5 H621.5Z" fill="#dedede"/>
<path d="M621.5 570 H630.5 V591.5 H621.5Z" fill="#ececec"/>
<path d="M630.5 556 L636 557 V591.5 H630.5Z" fill="#c9252c"/>
<path d="M630.5 572 L635 591.5 H625Z" fill="#f2f2f2"/>
<path d="M630 566 L623 591" stroke="#bdbdbd" stroke-width="1.2"/>
<path d="M623 547 L636 556.5 H627 Q623 556.5 623 552Z" fill="#f3f3f3"/>
<!-- rar -->
<path d="M755 555 H791 L794 564 V592 H752 V564Z" fill="url(#box)"/>
<path d="M755 555 H791 L794 564 H752Z" fill="#d8b17c"/>
<path d="M752 563.8 H794" stroke="#ebcfa6" stroke-width="1"/>
<rect x="770.5" y="555" width="4" height="13" fill="#ead3ad" opacity="0.8"/>
<text x="772.5" y="588" font-family="Liberation Sans" font-size="12.5" fill="#6a5232" text-anchor="middle">rar</text>
</svg>
</body></html>
